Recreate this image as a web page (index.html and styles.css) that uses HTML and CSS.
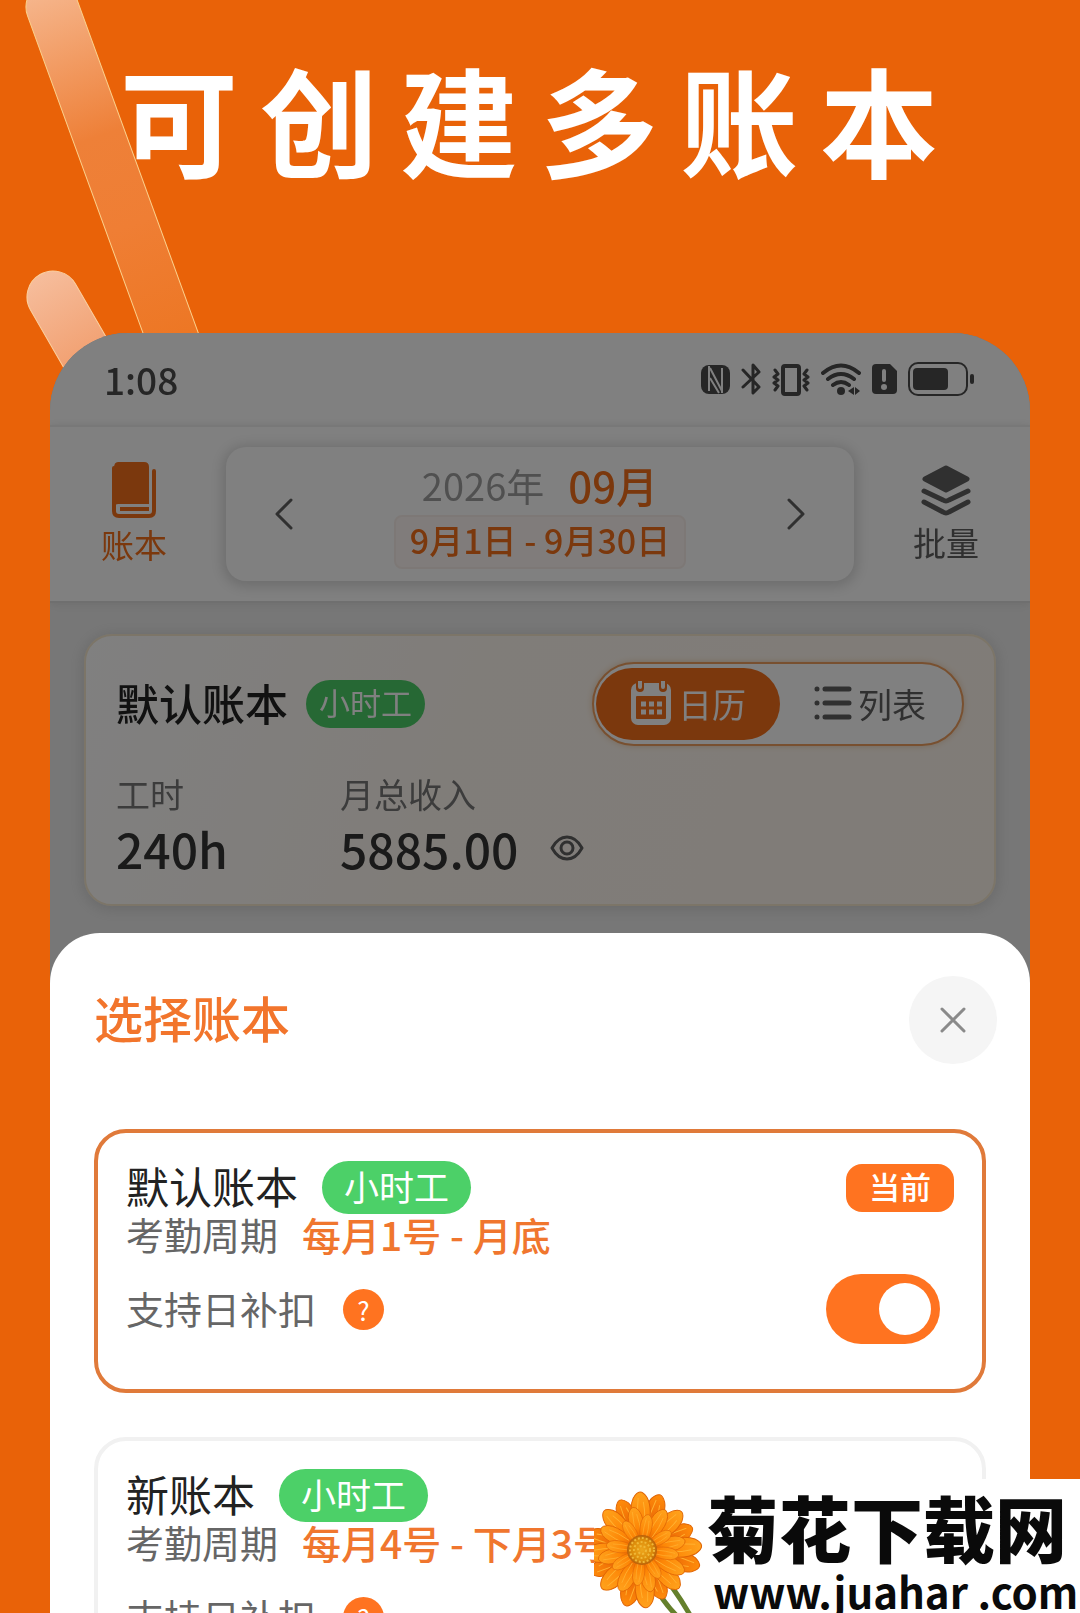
FILE: index.html
```
<!DOCTYPE html>
<html lang="zh-CN">

<head>
    <meta charset="UTF-8">
    <meta name="viewport" content="width=device-width, initial-scale=1">
    <title>可创建多账本</title>
    <link rel="stylesheet" href="styles.css">
</head>

<body>
    <div class="poster">
        <!-- stripes behind the phone -->
        <svg class="stripes" width="260" height="420" viewBox="0 0 260 420" aria-hidden="true">
            <defs>
                <linearGradient id="longStripe" x1="0" y1="0" x2="0" y2="1">
                    <stop offset="0" stop-color="#f6b890" />
                    <stop offset="0.38" stop-color="#ee8038" />
                    <stop offset="0.6" stop-color="#ef7e34" />
                    <stop offset="1" stop-color="#ec741e" />
                </linearGradient>
                <linearGradient id="shortStripe" x1="0" y1="0" x2="0" y2="1">
                    <stop offset="0" stop-color="#f6bd9c" />
                    <stop offset="1" stop-color="#ee8a50" />
                </linearGradient>
            </defs>
            <rect x="-26" y="-26" width="52" height="430" rx="26" fill="url(#longStripe)" stroke="#fbd08c"
                transform="translate(52 7) rotate(-20)" />
            <rect x="-26" y="-26" width="52" height="170" rx="26" fill="url(#shortStripe)" stroke="#fbd0a0"
                transform="translate(53 297) rotate(-30)" />
        </svg>

        <h1 class="headline">可创建多账本</h1>

        <div class="phone">
            <!-- page under the sheet, dimmed -->
            <div class="screen">
                <div class="statusbar">
                    <span class="time">1:08</span>
                    <div class="status-icons">
                        <svg width="29" height="34" viewBox="0 0 29 34">
                            <rect x="0" y="3" width="29" height="29" rx="8" fill="#4c4c4c" />
                            <path d="M8 4v25M21 6v25M9 6l12 23M9 16l9 15" fill="none" stroke="#fff"
                                stroke-width="2" />
                        </svg>
                        <svg width="20" height="34" viewBox="0 0 20 34" fill="none" stroke="#4c4c4c"
                            stroke-width="3" stroke-linejoin="round" stroke-linecap="round">
                            <path d="M2 8l16 17-6 6V3l6 7L2 25" />
                        </svg>
                        <svg width="38" height="34" viewBox="0 0 38 34" fill="none" stroke="#4c4c4c"
                            stroke-width="3" stroke-linejoin="round" stroke-linecap="round">
                            <rect x="11" y="4" width="16" height="28" rx="2" stroke-width="4" />
                            <path d="M3 8l3 4-4 3 4 3-4 3 4 3-3 4M35 8l-3 4 4 3-4 3 4 3-4 3 3 4" />
                        </svg>
                        <svg width="40" height="34" viewBox="0 0 40 34" fill="none" stroke="#4c4c4c"
                            stroke-width="4" stroke-linecap="round">
                            <path d="M2 11q18-15 36 0M7 17q13-10 26 0M12 23q8-6 16 0" />
                            <circle cx="20" cy="29" r="4" fill="#4c4c4c" stroke="none" />
                            <path d="M33 25v8l-6-4zM34 25v8l5-4z" fill="#4c4c4c" stroke="none" />
                        </svg>
                        <svg width="25" height="34" viewBox="0 0 25 34">
                            <path d="M4 2h14l7 7v19q0 4-4 4H4q-4 0-4-4V6q0-4 4-4z" fill="#4c4c4c" />
                            <path d="M12 9v9" stroke="#fff" stroke-width="4" stroke-linecap="round" />
                            <circle cx="12" cy="25" r="3" fill="#fff" />
                        </svg>
                        <svg width="66" height="34" viewBox="0 0 66 34">
                            <rect x="1" y="1" width="58" height="32" rx="9" fill="none" stroke="#4c4c4c"
                                stroke-width="2" />
                            <rect x="5" y="6" width="35" height="22" rx="4" fill="#4c4c4c" />
                            <rect x="62" y="12" width="4" height="10" rx="2" fill="#4c4c4c" />
                        </svg>
                    </div>
                </div>

                <div class="topnav">
                    <button type="button" class="nav-item nav-book">
                        <svg width="44" height="56" viewBox="0 0 44 56">
                            <path d="M6 0h26q5 0 5 5v37H6q-2 0-4 2V6q0-6 4-6z" fill="#f5701a" />
                            <path d="M2 6v43q0 5 5 5h30q5 0 5-5V9" fill="none" stroke="#f5701a" stroke-width="4"
                                stroke-linecap="round" />
                            <path d="M8 47h29" stroke="#f5701a" stroke-width="4" />
                        </svg>
                        账本
                    </button>
                    <div class="month-picker">
                        <button type="button" class="arrow" aria-label="上个月">
                            <svg width="20" height="34" viewBox="0 0 20 34">
                                <path d="M17 3L3 17l14 14" />
                            </svg>
                        </button>
                        <div class="month">
                            <p class="month-title"><span class="year">2026年</span><span>09月</span></p>
                            <p class="range">9月1日 - 9月30日</p>
                        </div>
                        <button type="button" class="arrow" aria-label="下个月">
                            <svg width="20" height="34" viewBox="0 0 20 34">
                                <path d="M3 3l14 14L3 31" />
                            </svg>
                        </button>
                    </div>
                    <button type="button" class="nav-item">
                        <svg width="50" height="52" viewBox="0 0 50 52" stroke="#606060" stroke-linejoin="round"
                            stroke-linecap="round">
                            <path d="M25 4l21 11-21 11L4 15z" fill="#606060" stroke-width="5" />
                            <path d="M3 27l19 9q3 2 6 0l19-9M3 38l19 10q3 2 6 0l19-10" fill="none"
                                stroke-width="5" />
                        </svg>
                        批量
                    </button>
                </div>

                <div class="summary">
                    <div class="summary-head">
                        <h2 class="book-name">默认账本</h2>
                        <span class="pill pill-small">小时工</span>
                        <div class="switcher">
                            <button type="button" class="tab active">
                                <svg width="42" height="44" viewBox="0 0 42 44">
                                    <rect x="1" y="2" width="40" height="42" rx="7" fill="#fff" />
                                    <rect x="6" y="15" width="30" height="23" rx="1" fill="#f5701a" />
                                    <path d="M10 1v6M33 1v6" stroke="#f5701a" stroke-width="8"
                                        stroke-linecap="round" />
                                    <path d="M10 0v6M33 0v6" stroke="#fff" stroke-width="4"
                                        stroke-linecap="round" />
                                    <path d="M11 23h21M11 31h21" stroke="#fff" stroke-width="5"
                                        stroke-dasharray="5 3" />
                                </svg>
                                日历
                            </button>
                            <button type="button" class="tab">
                                <svg width="38" height="36" viewBox="0 0 38 36" stroke="#606060" stroke-width="5"
                                    stroke-linecap="round">
                                    <path d="M3 4h0M11 4h24M3 18h0M11 18h24M3 32h0M11 32h24" />
                                </svg>
                                列表
                            </button>
                        </div>
                    </div>
                    <div class="stats">
                        <div class="stat">
                            <p class="stat-label">工时</p>
                            <p class="stat-value">240h</p>
                        </div>
                        <div class="stat">
                            <p class="stat-label">月总收入</p>
                            <p class="stat-value">5885.00
                                <button type="button" class="eye" aria-label="隐藏收入">
                                    <svg width="34" height="26" viewBox="0 0 34 26" fill="none" stroke="#606060"
                                        stroke-width="3">
                                        <path d="M2 13q6-11 15-11t15 11q-6 11-15 11T2 13z"
                                            stroke-linejoin="round" />
                                        <circle cx="17" cy="13" r="6" />
                                    </svg>
                                </button>
                            </p>
                        </div>
                    </div>
                </div>
            </div>

            <!-- bottom sheet -->
            <div class="sheet">
                <div class="sheet-head">
                    <h2 class="sheet-title">选择账本</h2>
                    <button type="button" class="close" aria-label="关闭">
                        <svg width="28" height="28" viewBox="0 0 28 28" stroke="#8a8a8a" stroke-width="3"
                            stroke-linecap="round">
                            <path d="M3 3l22 22M25 3L3 25" />
                        </svg>
                    </button>
                </div>

                <div class="book current">
                    <div class="book-head">
                        <h3 class="book-name">默认账本</h3>
                        <span class="pill">小时工</span>
                        <span class="badge">当前</span>
                    </div>
                    <p class="cycle">考勤周期 <strong>每月1号 - 月底</strong></p>
                    <div class="option">
                        <label for="deduct1">支持日补扣</label>
                        <button type="button" class="help">?</button>
                        <input type="checkbox" class="toggle" id="deduct1" checked>
                    </div>
                </div>

                <div class="book">
                    <div class="book-head">
                        <h3 class="book-name">新账本</h3>
                        <span class="pill">小时工</span>
                    </div>
                    <p class="cycle">考勤周期 <strong>每月4号 - 下月3号</strong></p>
                    <div class="option">
                        <label for="deduct2">支持日补扣</label>
                        <button type="button" class="help">?</button>
                        <input type="checkbox" class="toggle" id="deduct2" checked>
                    </div>
                </div>
            </div>
        </div>

        <div class="watermark">
            <svg class="flower" width="110" height="134" viewBox="0 0 110 134" aria-hidden="true">
                <defs>
                    <linearGradient id="petalFill" x1="0" y1="0" x2="0" y2="1">
                        <stop offset="0" stop-color="#ffa21c" />
                        <stop offset="0.5" stop-color="#fd8606" />
                        <stop offset="1" stop-color="#d24c02" />
                    </linearGradient>
                    <linearGradient id="petalDark" x1="0" y1="0" x2="0" y2="1">
                        <stop offset="0" stop-color="#ff8c0a" />
                        <stop offset="1" stop-color="#d84602" />
                    </linearGradient>
                    <radialGradient id="coreFill">
                        <stop offset="0" stop-color="#eda51c" />
                        <stop offset="0.7" stop-color="#dc8c0a" />
                        <stop offset="1" stop-color="#b8600a" />
                    </radialGradient>
                    <g id="petal">
                        <path d="M0 0C-5-12-14-38-7-52Q0-64 7-52C14-38 5-12 0 0z" stroke="#e06404"
                            stroke-width="1" />
                        <path d="M-3-20Q-4-36-2-52M3-20Q5-36 3-48" fill="none" stroke="#ffb030"
                            stroke-width="1" />
                    </g>
                    <g id="ring">
                        <use href="#petal" transform="rotate(2)" />
                        <use href="#petal" transform="rotate(50) scale(0.95)" />
                        <use href="#petal" transform="rotate(90) scale(1.03)" />
                        <use href="#petal" transform="rotate(140) scale(0.92)" />
                        <use href="#petal" transform="rotate(180)" />
                        <use href="#petal" transform="rotate(230) scale(0.96)" />
                        <use href="#petal" transform="rotate(270)" />
                        <use href="#petal" transform="rotate(320) scale(0.94)" />
                    </g>
                </defs>
                <path d="M60 106Q70 124 82 136M78 108Q88 122 96 136" fill="none" stroke="#64802c"
                    stroke-width="5" />
                <g transform="translate(48 71)">
                    <use href="#ring" fill="url(#petalDark)" transform="rotate(16)" />
                    <use href="#ring" fill="url(#petalFill)" transform="rotate(-4)" />
                    <use href="#ring" fill="url(#petalFill)" transform="rotate(28) scale(0.8)" />
                    <use href="#ring" fill="url(#petalFill)" transform="rotate(8) scale(0.62)" />
                    <circle r="15" fill="url(#coreFill)" />
                    <circle r="12" fill="none" stroke="#f0b838" stroke-width="2" stroke-dasharray="2 2" />
                    <circle r="8" fill="none" stroke="#f0b838" stroke-width="2" stroke-dasharray="2 2" />
                    <circle r="4" fill="none" stroke="#f0b838" stroke-width="2" stroke-dasharray="2 2" />
                </g>
            </svg>
            <div class="site">
                <p class="site-name">菊花下载网</p>
                <p class="site-url">www.juahar .com</p>
            </div>
        </div>
    </div>
</body>

</html>
```

FILE: styles.css
```
* {
    margin: 0;
    padding: 0;
    box-sizing: border-box;
}

body {
    font-family: 'Noto Sans CJK SC', 'Noto Sans', sans-serif;
    background: #e96208;
    color: #333;
}

button {
    border: none;
    background: none;
    font: inherit;
    color: inherit;
}

svg {
    display: block;
    flex-shrink: 0;
}

.poster {
    position: relative;
    height: 100vh;
    overflow: hidden;
    padding: 0 50px;
}

.stripes {
    position: absolute;
    left: 0;
    top: 0;
}

.headline {
    position: relative;
    padding: 26px 0 123px 70px;
    font-size: 118px;
    line-height: 184px;
    letter-spacing: 22px;
    font-weight: 700;
    color: #fff;
    white-space: nowrap;
}

/* phone */
.phone {
    background: #777;
    border-radius: 78px 78px 0 0;
}

.screen {
    overflow: hidden;
    border-radius: 78px 78px 0 0;
    background: #eee;
    filter: brightness(0.5);
}

.statusbar {
    display: flex;
    justify-content: space-between;
    align-items: center;
    height: 92px;
    padding: 0 56px 0 54px;
    background: #fff;
    color: #4c4c4c;
}

.time {
    font-size: 37px;
    font-weight: 500;
}

.status-icons {
    display: flex;
    align-items: center;
    gap: 11px;
}

.topnav {
    display: grid;
    grid-template-columns: 168px 1fr 168px;
    gap: 8px;
    align-items: center;
    height: 178px;
    background: #fff;
    border-top: 2px solid #f0f0f0;
    border-bottom: 2px solid #ddd;
    box-shadow: 0 2px 8px #ddd;
}

.nav-item {
    display: flex;
    flex-direction: column;
    align-items: center;
    gap: 4px;
    font-size: 33px;
    line-height: 44px;
    color: #606060;
}

.nav-book {
    color: #f5701a;
}

.month-picker {
    display: flex;
    justify-content: space-between;
    align-items: center;
    height: 134px;
    padding: 0 48px;
    border-radius: 20px;
    box-shadow: 0 2px 12px 4px #ddd;
}

.arrow path {
    fill: none;
    stroke: #606060;
    stroke-width: 3;
    stroke-linecap: round;
    stroke-linejoin: round;
}

.month {
    display: flex;
    flex-direction: column;
    align-items: center;
    color: #f5701a;
    font-weight: 500;
}

.month-title {
    display: flex;
    align-items: center;
    gap: 24px;
    font-size: 42px;
    line-height: 52px;
    padding-bottom: 4px;
}

.year {
    font-size: 38px;
    font-weight: 400;
    color: #a0a0a0;
}

.range {
    padding: 0 14px 4px;
    font-size: 34px;
    line-height: 46px;
    border: 2px solid #faf0ec;
    border-radius: 8px;
    background: #fff8f5;
}

.summary {
    margin: 31px 34px 27px;
    padding: 26px 30px 22px;
    border: 2px solid #f8ead0;
    border-radius: 28px;
    background: linear-gradient(110deg, #fff 0%, #fff9f2 40%, #fff7ee 100%);
    box-shadow: 0 2px 14px 2px #d4d4d4;
}

.summary-head {
    display: flex;
    align-items: center;
}

.book-name {
    padding-bottom: 4px;
    font-size: 43px;
    line-height: 49px;
    font-weight: 400;
    color: #222;
}

.summary .book-name {
    font-weight: 500;
}

.pill {
    margin-left: 24px;
    padding: 0 22px 4px;
    border-radius: 27px;
    background: #4cd068;
    color: #fff;
    font-size: 35px;
    line-height: 49px;
}

.pill-small {
    margin-left: 18px;
    padding: 0 13px 4px;
    font-size: 31px;
    line-height: 44px;
}

.switcher {
    display: flex;
    margin-left: auto;
    padding: 4px 2px;
    border: 2px solid #f0a060;
    border-radius: 42px;
    background: #fff;
    box-shadow: 0 0 6px #f0d0b0;
}

.tab {
    display: flex;
    align-items: center;
    gap: 6px;
    height: 72px;
    padding: 0 34px 2px;
    border-radius: 36px;
    font-size: 34px;
    color: #606060;
}

.tab.active {
    background: #f5701a;
    color: #fff;
}

.stats {
    display: flex;
    margin-top: 24px;
}

.stat {
    min-width: 224px;
}

.stat-label {
    font-size: 34px;
    line-height: 48px;
    color: #777;
}

.stat-value {
    display: flex;
    align-items: center;
    gap: 32px;
    padding-bottom: 4px;
    font-size: 48px;
    line-height: 60px;
    font-weight: 500;
}

/* bottom sheet */
.sheet {
    padding: 43px 44px;
    border-radius: 50px 50px 0 0;
    background: #fff;
}

.sheet-head {
    display: flex;
    justify-content: space-between;
    align-items: center;
    margin: 0 -11px 65px 0;
}

.sheet-title {
    padding-bottom: 8px;
    font-size: 49px;
    font-weight: 500;
    color: #f2752c;
}

.close {
    display: flex;
    justify-content: center;
    align-items: center;
    width: 88px;
    height: 88px;
    border-radius: 50%;
    background: #f5f5f5;
}

.book {
    margin-bottom: 44px;
    padding: 28px 28px 45px;
    border: 4px solid #f1f1f1;
    border-radius: 32px;
}

.book.current {
    border-color: #e07a3a;
}

.book-head {
    display: flex;
    align-items: center;
}

.badge {
    margin-left: auto;
    padding: 0 23px 4px;
    border-radius: 16px;
    background: #ff7320;
    color: #fff;
    font-size: 31px;
    font-weight: 500;
    line-height: 44px;
}

.cycle {
    display: flex;
    gap: 24px;
    padding-bottom: 4px;
    font-size: 38px;
    line-height: 40px;
    color: #666;
}

.cycle strong {
    font-size: 39px;
    font-weight: 500;
    color: #f0762e;
}

.option {
    display: flex;
    align-items: center;
    margin-top: 16px;
    font-size: 38px;
    color: #666;
}

.option label {
    padding-bottom: 4px;
}

.help {
    width: 41px;
    height: 41px;
    margin-left: 27px;
    border-radius: 50%;
    background: #ff7320;
    color: #fff;
    font-size: 26px;
    line-height: 41px;
}

.toggle {
    appearance: none;
    width: 114px;
    height: 70px;
    margin: 0 14px 0 auto;
    padding: 9px;
    border-radius: 35px;
    background: #ccc;
}

.toggle::before {
    content: "";
    display: block;
    width: 52px;
    height: 52px;
    border-radius: 50%;
    background: #fff;
}

.toggle:checked {
    background: #ff7320;
}

.toggle:checked::before {
    margin-left: auto;
}

/* site watermark in the corner */
.watermark {
    position: absolute;
    right: 0;
    bottom: 0;
    display: flex;
    height: 134px;
    width: 486px;
    overflow: hidden;
    background: #fff;
    color: #0a0a0a;
}

.site {
    padding: 8px 0 0 3px;
    white-space: nowrap;
}

.site-name {
    font-size: 72px;
    line-height: 78px;
    font-weight: 900;
}

.site-url {
    padding-left: 6px;
    font-size: 42px;
    line-height: 52px;
    font-weight: 700;
}
```
